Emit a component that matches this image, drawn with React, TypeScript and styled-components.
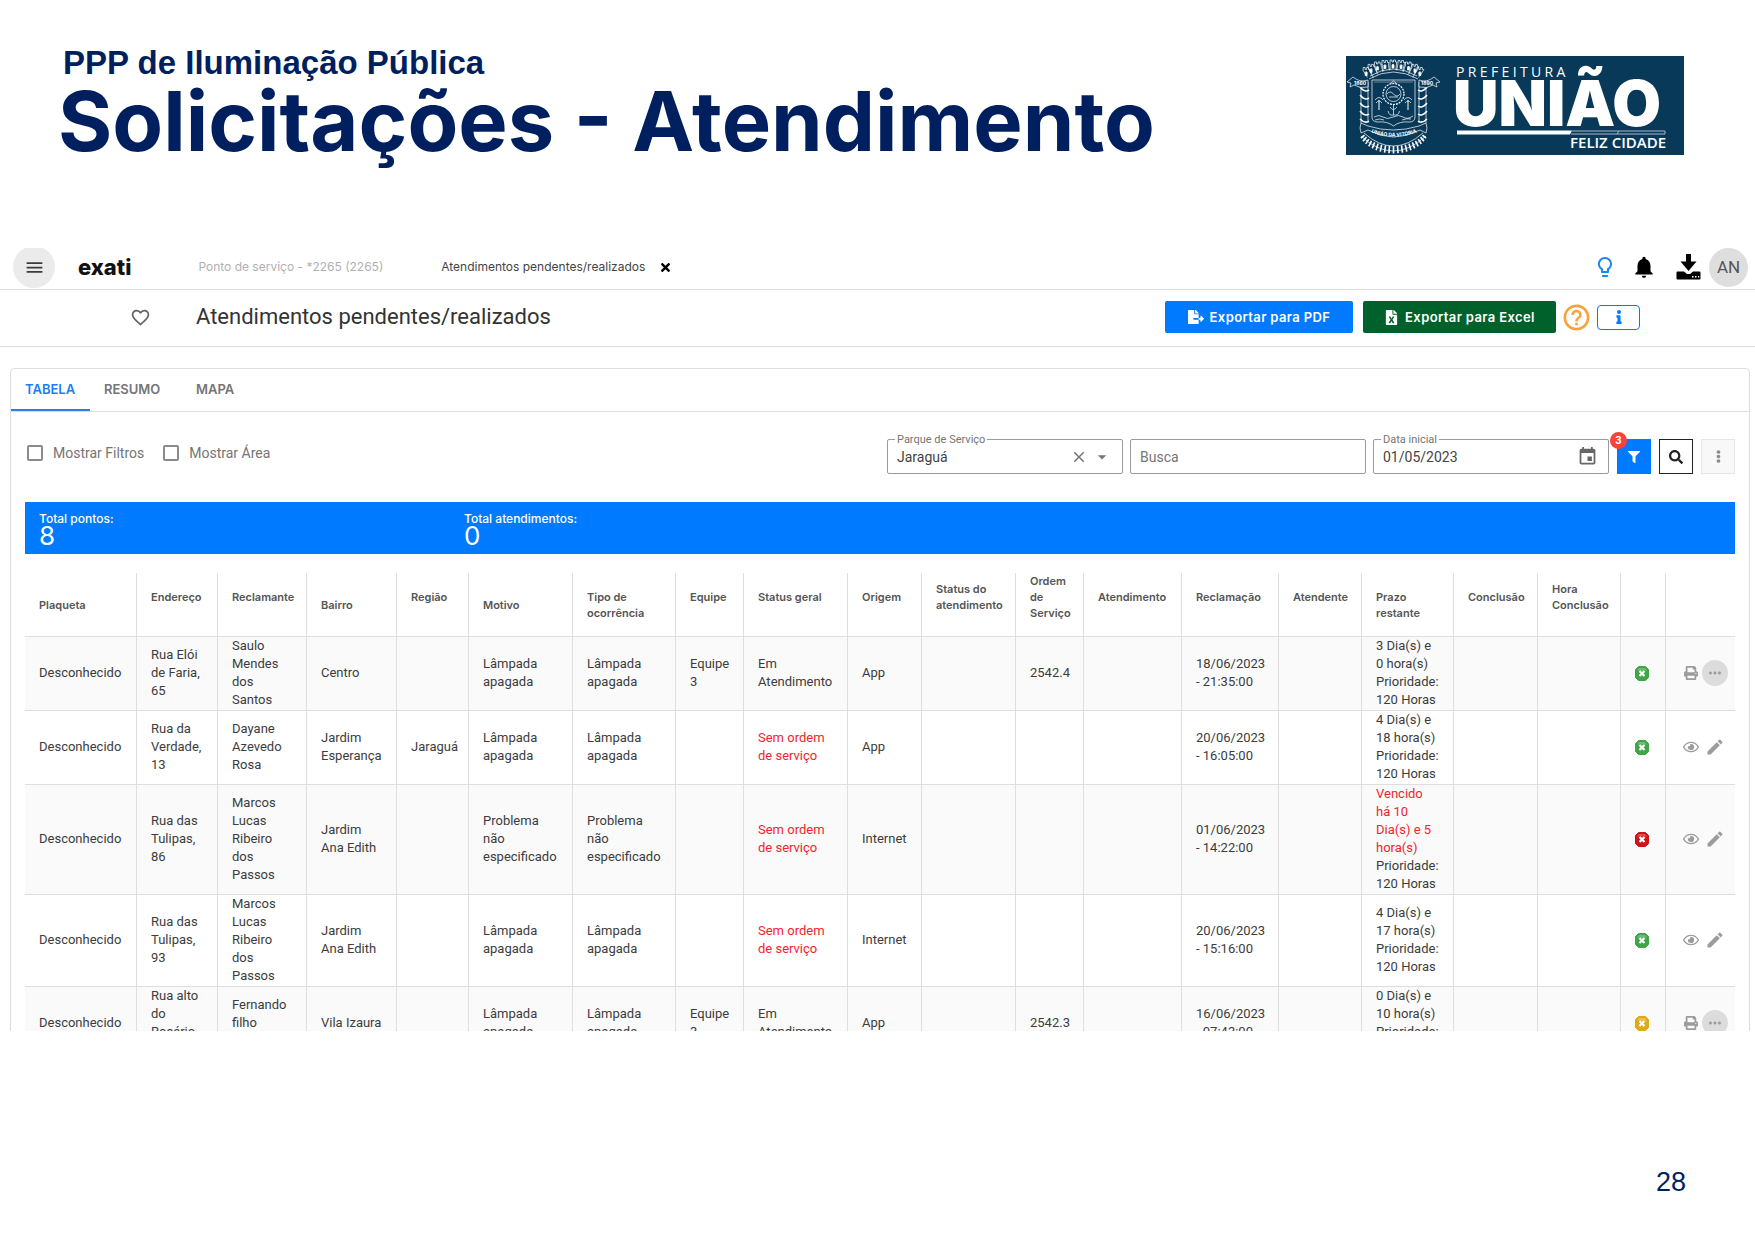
import React from "react";
import styled, { createGlobalStyle } from "styled-components";
import {
  MdMenu, MdLightbulbOutline, MdNotifications, MdFavoriteBorder, MdHelpOutline,
  MdClear, MdArrowDropDown, MdEvent, MdEdit, MdMoreHoriz,
} from "react-icons/md";
import {
  FaTimes, FaFileExport, FaFileExcel, FaInfo, FaFilter, FaSearch, FaEllipsisV, FaPrint, FaRegEye,
} from "react-icons/fa";

const color = {
  navy: "#001f5f",
  blue: "#007bff",
  green: "#00622a",
  line: "#dedede",
  text: "#3c3c3c",
  muted: "#757575",
  red: "#f5222d",
};

const Global = createGlobalStyle`
  *, *::before, *::after { box-sizing: border-box; }
  body { margin: 0; background: #fff; color: ${color.text}; font-family: Roboto, "Liberation Sans", sans-serif; }
  button, input, select { font: inherit; color: inherit; margin: 0; }
  button { padding: 0; border: 0; background: none; cursor: pointer; }
  svg { display: block; flex: none; }
`;

const Slide = styled.div`
  display: flex;
  flex-direction: column;
  min-height: 100vh;
`;

const SlideHeader = styled.header`
  display: flex;
  justify-content: space-between;
  align-items: flex-start;
  padding: 44px 71px 0 58px;
  min-height: 248px;
`;

const Heading = styled.div`
  color: ${color.navy};
  white-space: nowrap;
`;

const Kicker = styled.p`
  margin: 0;
  padding-left: 5px;
  font: 700 33px/38px "Liberation Sans", Arial, sans-serif;
`;

const Title = styled.h1`
  margin: 0;
  font: 700 83px/78px Inter, "Liberation Sans", sans-serif;
`;

const CityLogo = styled.svg`
  width: 338px;
  height: 99px;
  margin-top: 12px;
`;

const AppShot = styled.main`
  max-height: 783px;
  overflow: hidden;
`;

const TopBar = styled.div`
  display: flex;
  align-items: center;
  height: 42px;
  padding: 0 7px 3px 13px;
  border-bottom: 1px solid ${color.line};
`;

const MenuButton = styled.button`
  display: grid;
  place-items: center;
  flex: none;
  width: 42px;
  height: 42px;
  border-radius: 50%;
  background: #ebebeb;
`;

const Brand = styled.a`
  margin-left: 23px;
  color: #111;
  font: 800 22px/26px Inter, sans-serif;
  text-decoration: none;
`;

const OpenPages = styled.nav`
  display: flex;
  align-items: center;
  gap: 58px;
  flex: 1;
  margin-left: 67px;
  font: 12px/16px Inter, sans-serif;
`;

const PageLink = styled.a<{ $active?: boolean }>`
  color: ${(p) => (p.$active ? "#444" : "#b0b0b0")};
  text-decoration: none;
`;

const OpenPage = styled.span`
  display: flex;
  align-items: center;
  gap: 14px;
  color: #222;
`;

const TopActions = styled.div`
  display: flex;
  align-items: center;
  gap: 14px;
`;

const IconButton = styled.button<{ $color?: string }>`
  display: grid;
  place-items: center;
  color: ${(p) => p.$color ?? "#000"};
`;

const UserGroup = styled.div`
  display: flex;
  align-items: center;
  gap: 8px;
  margin-left: 5px;
`;

const Avatar = styled.button`
  width: 39px;
  height: 39px;
  border-radius: 50%;
  background: #dedede;
  color: #555;
  font-size: 17px;
`;

const PageBar = styled.div`
  display: flex;
  align-items: center;
  height: 57px;
  padding: 0 115px 2px 130px;
  border-bottom: 1px solid ${color.line};
`;

const PageTitle = styled.h2`
  flex: 1;
  margin: 0 0 0 45px;
  color: #333;
  font-size: 22px;
  font-weight: 400;
  line-height: 28px;
`;

const PageActions = styled.div`
  display: flex;
  align-items: center;
`;

const ExportButton = styled.button<{ $bg: string; $width: number }>`
  display: flex;
  align-items: center;
  justify-content: center;
  gap: 6px;
  width: ${(p) => p.$width}px;
  height: 32px;
  margin-right: 10px;
  border-radius: 2px;
  background: ${(p) => p.$bg};
  color: #fff;
  font: 600 13px/16px Inter, sans-serif;
  letter-spacing: 0.03em;
`;

const HelpButton = styled(IconButton)`
  width: 30px;
  margin: 0 4px 0 -5px;
`;

const InfoButton = styled.button`
  display: grid;
  place-items: center;
  width: 43px;
  height: 25px;
  margin-left: 2px;
  border: 1px solid ${color.blue};
  border-radius: 4px;
  color: ${color.blue};
`;

const Card = styled.section`
  margin: 21px 5px 0 10px;
  border: 1px solid ${color.line};
  border-radius: 4px;
`;

const Tabs = styled.div`
  display: grid;
  grid-template-columns: 79px 92px auto;
  justify-content: start;
  height: 43px;
  border-bottom: 1px solid ${color.line};
`;

const Tab = styled.button<{ $active?: boolean }>`
  height: 42px;
  padding: 0 0 0 14px;
  border-bottom: 2px solid ${(p) => (p.$active ? "#2a7fe0" : "transparent")};
  color: ${(p) => (p.$active ? "#1b7ff2" : color.muted)};
  font: 600 13px/16px Inter, sans-serif;
  text-align: left;
`;

const Toolbar = styled.div`
  display: flex;
  align-items: center;
  justify-content: space-between;
  padding: 27px 14px 0 16px;
`;

const Checks = styled.div`
  display: flex;
  gap: 19px;
  margin-bottom: 8px;
`;

const Check = styled.label`
  display: flex;
  align-items: center;
  gap: 10px;
  color: ${color.muted};
  font-size: 14px;
  line-height: 18px;

  input {
    appearance: none;
    width: 16px;
    height: 16px;
    border: 2px solid #8a8a8a;
    border-radius: 2px;
  }
`;

const Filters = styled.div`
  display: flex;
  align-items: center;
  gap: 8px;
`;

const Fields = styled.div`
  display: flex;
  gap: 7px;
`;

const FilterButtons = styled.div`
  display: flex;
  gap: 8px;
`;

const Field = styled.div`
  position: relative;
  display: flex;
  align-items: center;
  width: 236px;
  height: 35px;
  padding: 0 10px 0 9px;
  border: 1px solid #9a9a9a;
  border-radius: 2px;
  color: ${color.muted};

  input, select {
    flex: 1;
    min-width: 0;
    height: 20px;
    padding: 0;
    border: 0;
    outline: 0;
    appearance: none;
    background: none;
    color: #444;
    font-size: 14px;
    line-height: 20px;
  }
  input::placeholder { color: ${color.muted}; opacity: 1; }
`;

const FieldLabel = styled.label`
  position: absolute;
  top: -7px;
  left: 7px;
  padding: 0 2px;
  background: #fff;
  font-size: 11px;
  line-height: 13px;
`;

const FieldIcons = styled.div`
  display: flex;
  align-items: center;
  gap: 4px;
`;

const SquareButton = styled.button<{ $kind: "solid" | "outline" | "ghost" }>`
  position: relative;
  display: grid;
  place-items: center;
  width: 34px;
  height: 35px;
  border: ${(p) => ({ solid: "0", outline: "1px solid #222", ghost: "1px solid #e6e6e6" })[p.$kind]};
  background: ${(p) => ({ solid: color.blue, outline: "#fff", ghost: "#f8f8f8" })[p.$kind]};
  color: ${(p) => ({ solid: "#fff", outline: "#222", ghost: "#8a8a8a" })[p.$kind]};
`;

const Badge = styled.span`
  position: absolute;
  top: -7px;
  left: -7px;
  width: 17px;
  height: 17px;
  border-radius: 50%;
  background: #f9423a;
  color: #fff;
  font-size: 11px;
  font-weight: 700;
  line-height: 17px;
`;

const Totals = styled.dl`
  display: grid;
  grid-template-columns: repeat(4, 1fr);
  margin: 28px 14px 0;
  padding: 9px 5px 9px;
  background: ${color.blue};
  color: #fff;
`;

const Total = styled.div`
  padding-left: 9px;

  dt { font: 500 12px/16px Inter, sans-serif; }
  dd { margin: 0; font: 26px/18px Inter, sans-serif; }
`;

const TableWrap = styled.div`
  padding: 19px 14px 0;
`;

const Table = styled.table`
  width: 100%;
  table-layout: fixed;
  border-collapse: separate;
  border-spacing: 0;
  font-size: 13px;
  line-height: 18px;
`;

const Th = styled.th<{ $sortable?: boolean }>`
  height: 64px;
  padding: 0 0 ${(p) => (p.$sortable ? 15 : 0)}px 14px;
  border: solid ${color.line};
  border-width: 0 1px 1px 0;
  color: #555;
  font: 600 11px/16px Inter, sans-serif;
  text-align: left;
  vertical-align: middle;
  white-space: pre;

  &:last-child { border-right: 0; }
`;

const Row = styled.tr`
  &:nth-child(odd) { background: #fafafa; }
`;

const Td = styled.td`
  padding: 0 0 1px 14px;
  border: solid ${color.line};
  border-width: 0 1px 1px 0;
  vertical-align: middle;
  white-space: pre;

  &:last-child { border-right: 0; }
`;

const Alert = styled.span`
  color: ${color.red};
`;

const Actions = styled.div`
  display: flex;
  align-items: center;
  gap: 3px;
  padding-left: 3px;
`;

const ActionButton = styled.button<{ $size: number; $round?: boolean }>`
  display: grid;
  place-items: center;
  width: ${(p) => p.$size}px;
  height: 26px;
  border-radius: 50%;
  background: ${(p) => (p.$round ? "#dcdcdc" : "none")};
  color: #9c9c9c;
`;

const SlideFooter = styled.footer`
  margin-top: auto;
  padding: 0 69px 43px;
  color: ${color.navy};
  font: 27px/30px "Liberation Sans", Arial, sans-serif;
  text-align: right;
`;

/* Points along an arc, used for the crown merlons and the rail sleepers. */
const along = (from: number, to: number, n: number) =>
  Array.from({ length: n }, (_, i) => ((from + ((to - from) * i) / (n - 1)) * Math.PI) / 180);

const Crest = () => (
  <g fill="none" stroke="#fff" strokeWidth="0.7">
    <path d="M23 23Q47 9 72 23M24 20Q47 6 71 20" />
    {along(-150, -30, 9).map((a, i) => {
      const x = 47.5 + 31 * Math.cos(a);
      const y = 22 + 15 * Math.sin(a);
      const d = (x - 47.5) * 0.16;
      return (
        <g key={i}>
          <path d={`M${x - 3.5 - d} ${y + 7}L${x - 3.5} ${y}v-3h2v2h1.5v-2h2v2h1.5l-.5 1L${x + 2.5 - d} ${y + 7}`} />
          <path d={`M${x - 1.5} ${y + 5}v-3l1 -1l1 1v3z`} fill="#fff" />
        </g>
      );
    })}
    <path d="M26 24H69V61Q69 66 63 66Q54 65 47.5 70Q41 65 32 66Q26 66 26 61Z" />
    <path d="M28 26H67" strokeWidth="0.4" />
    <circle cx="47.5" cy="38" r="10.5" strokeDasharray="2 1" strokeWidth="1.2" />
    <circle cx="47.5" cy="38" r="7.5" />
    <path d="M41 38q3 -4 6.500 0t6.500 0M43 41h9M45 27l2.500 -2l2.500 2M47.500 49v10M42 55q1 5 5.500 4q5 1 6 -4M44 51q3 5 7 0" />
    <path d="M33 44v10M62 44v10" strokeWidth="1" />
    <path d="M29 44q4 -5 8 0M30 47q3 -4 6 0M58 44q4 -5 8 0M59 47q3 -4 6 0" />
    <path d="M28 61q5 -3 9 0t10 0t10 0t10 -1M29 64q5 -2 9 0M56 64q5 -2 9 -1" />
    <path d="M15 26V67M22 26V67M73 26V67M80 26V67" />
    <path d="M14 31q5 6 9 3M14 39q5 6 9 3M14 47q5 6 9 3M14 55q5 6 9 3M14 63q5 5 9 2M81 31q-5 6 -9 3M81 39q-5 6 -9 3M81 47q-5 6 -9 3M81 55q-5 6 -9 3M81 63q-5 5 -9 2" strokeWidth="1.5" />
    <path d="M1 26l6 -5q7 6 15 3v7q-8 2 -14 -2l-4 2l1 -4zM94 26l-6 -5q-7 6 -15 3v7q8 2 14 -2l4 2l-1 -4z" fill="#083959" />
    <path d="M15 67Q13 72 15 77L22 74Q47 88 74 74L80 77Q82 72 80 67L73 70Q47 78 22 70Z" fill="#083959" />
    <path d="M18 77Q47 103 77 77M15 80Q47 110 80 80" />
    {along(155, 25, 19).map((a, i) => (
      <path
        key={i}
        strokeWidth="1.6"
        d={`M${47.5 + 32 * Math.cos(a)} ${71 + 19 * Math.sin(a)}L${47.5 + 36 * Math.cos(a)} ${71 + 26.5 * Math.sin(a)}`}
      />
    ))}
    <g fill="#fff" stroke="none" fontFamily="Inter, sans-serif" fontWeight="700">
      <path id="banner" d="M24 76Q47.500 85 72 76" fill="none" />
      <text fontSize="5"><textPath href="#banner" startOffset="50%" textAnchor="middle">UNIÃO DA VITORIA</textPath></text>
      <text fontSize="5" x="8" y="29">1860</text>
      <text fontSize="5" x="75" y="29">1890</text>
    </g>
  </g>
);

const Logo = () => (
  <CityLogo viewBox="0 0 338 99" role="img" aria-label="Prefeitura União, Feliz Cidade">
    <rect width="338" height="99" fill="#083959" />
    <Crest />
    <g fill="#fff">
      <text x="110" y="21" fontFamily="Open Sans, sans-serif" fontSize="14" letterSpacing="0.24em">PREFEITURA</text>
      <text x="107" y="70" fontFamily="Inter, sans-serif" fontSize="63" fontWeight="900">UNIÃO</text>
      <text x="320" y="92" textAnchor="end" fontFamily="Open Sans, sans-serif" fontSize="15" fontWeight="600">FELIZ CIDADE</text>
      <path d="M111 74.500H226L224 78.500H111Z" />
      <path d="M226 75H319V78H225M273 75l-2 3" fill="none" stroke="#a9bccb" />
    </g>
  </CityLogo>
);

const DownloadIcon = () => (
  <svg width="25" height="26" viewBox="0 0 25 26" aria-hidden="true">
    <path d="M10 0h5v7.500h5.500L12.500 17 4.500 7.500h5.500z" />
    <path fillRule="evenodd" d="M1.500 17.500h6.500l3 2.500h3l3 -2.500h6.500q1 0 1 1v6q0 1 -1 1H1.500q-1 0 -1 -1v-6q0 -1 1 -1zM16 22v1.500h1.500V22zM19 22v1.500h1.500V22zM22 22v1.500h1.200V22z" />
  </svg>
);

const fills = { green: "#3fa648", red: "#cf1318", yellow: "#dfab12" };

const StatusIcon = ({ tone }: { tone: keyof typeof fills }) => (
  <svg width="14" height="15" viewBox="0 0 14 15" role="img" aria-label="Prazo">
    <path d="M3.500 .5h7l3 3v8l-3 3h-7l-3 -3v-8z" fill={fills[tone]} stroke={fills[tone]} strokeLinejoin="round" />
    <path d="M2 4.500l2 -2.500h6l2 2.500z" fill="#fff" opacity=".25" />
    <path d="M4.500 5l5 5M9.500 5l-5 5" stroke="#fff" strokeWidth="2.200" />
  </svg>
);

const columns: { label: string; width: number; sortable?: boolean }[] = [
  { label: "Plaqueta", width: 112 },
  { label: "Endereço", width: 81, sortable: true },
  { label: "Reclamante", width: 89, sortable: true },
  { label: "Bairro", width: 90 },
  { label: "Região", width: 72, sortable: true },
  { label: "Motivo", width: 104 },
  { label: "Tipo de\nocorrência", width: 103 },
  { label: "Equipe", width: 68, sortable: true },
  { label: "Status geral", width: 104, sortable: true },
  { label: "Origem", width: 74, sortable: true },
  { label: "Status do\natendimento", width: 94, sortable: true },
  { label: "Ordem\nde\nServiço", width: 68, sortable: true },
  { label: "Atendimento", width: 98, sortable: true },
  { label: "Reclamação", width: 97, sortable: true },
  { label: "Atendente", width: 83, sortable: true },
  { label: "Prazo\nrestante", width: 92 },
  { label: "Conclusão", width: 84, sortable: true },
  { label: "Hora\nConclusão", width: 83, sortable: true },
  { label: "", width: 45 },
  { label: "", width: 69 },
];

type Request = {
  address: string; claimant: string; district: string; region?: string; reason: string;
  team?: string; open?: boolean; origin: string; order?: string; date: string;
  due: string; overdue?: boolean; tone: keyof typeof fills;
};

const requests: Request[] = [
  { address: "Rua Elói\nde Faria,\n65", claimant: "Saulo\nMendes\ndos\nSantos", district: "Centro", reason: "Lâmpada\napagada", team: "Equipe\n3", open: true, origin: "App", order: "2542.4", date: "18/06/2023\n- 21:35:00", due: "3 Dia(s) e\n0 hora(s)", tone: "green" },
  { address: "Rua da\nVerdade,\n13", claimant: "Dayane\nAzevedo\nRosa", district: "Jardim\nEsperança", region: "Jaraguá", reason: "Lâmpada\napagada", origin: "App", date: "20/06/2023\n- 16:05:00", due: "4 Dia(s) e\n18 hora(s)", tone: "green" },
  { address: "Rua das\nTulipas,\n86", claimant: "Marcos\nLucas\nRibeiro\ndos\nPassos", district: "Jardim\nAna Edith", reason: "Problema\nnão\nespecificado", origin: "Internet", date: "01/06/2023\n- 14:22:00", due: "Vencido\nhá 10\nDia(s) e 5\nhora(s)", overdue: true, tone: "red" },
  { address: "Rua das\nTulipas,\n93", claimant: "Marcos\nLucas\nRibeiro\ndos\nPassos", district: "Jardim\nAna Edith", reason: "Lâmpada\napagada", origin: "Internet", date: "20/06/2023\n- 15:16:00", due: "4 Dia(s) e\n17 hora(s)", tone: "green" },
  { address: "Rua alto\ndo\nRosário\n\u00a0", claimant: "Fernando\nfilho\n\u00a0", district: "Vila Izaura", reason: "Lâmpada\napagada", team: "Equipe\n3", open: true, origin: "App", order: "2542.3", date: "16/06/2023\n- 07:43:00", due: "0 Dia(s) e\n10 hora(s)", tone: "yellow" },
];

const RequestRow = ({ r }: { r: Request }) => (
  <Row>
    <Td>Desconhecido</Td>
    <Td>{r.address}</Td>
    <Td>{r.claimant}</Td>
    <Td>{r.district}</Td>
    <Td>{r.region}</Td>
    <Td>{r.reason}</Td>
    <Td>{r.reason}</Td>
    <Td>{r.team}</Td>
    <Td>{r.open ? "Em\nAtendimento" : <Alert>{"Sem ordem\nde serviço"}</Alert>}</Td>
    <Td>{r.origin}</Td>
    <Td />
    <Td>{r.order}</Td>
    <Td />
    <Td>{r.date}</Td>
    <Td />
    <Td>{r.overdue ? <Alert>{r.due}</Alert> : r.due}{"\nPrioridade:\n120 Horas"}</Td>
    <Td />
    <Td />
    <Td><StatusIcon tone={r.tone} /></Td>
    <Td>
      <Actions>
        <ActionButton $size={16} aria-label={r.open ? "Imprimir" : "Visualizar"}>
          {r.open ? <FaPrint size={14} /> : <FaRegEye size={16} />}
        </ActionButton>
        <ActionButton $size={26} $round={r.open} aria-label={r.open ? "Mais opções" : "Editar"}>
          {r.open ? <MdMoreHoriz size={18} /> : <MdEdit size={20} />}
        </ActionButton>
      </Actions>
    </Td>
  </Row>
);

export default function App() {
  return (
    <Slide>
      <Global />
      <SlideHeader>
        <Heading>
          <Kicker>PPP de Iluminação Pública</Kicker>
          <Title>Solicitações - Atendimento</Title>
        </Heading>
        <Logo />
      </SlideHeader>

      <AppShot>
        <TopBar>
          <MenuButton aria-label="Menu"><MdMenu size={21} /></MenuButton>
          <Brand href="#inicio">exati</Brand>
          <OpenPages>
            <PageLink href="#ponto">Ponto de serviço - *2265 (2265)</PageLink>
            <OpenPage>
              <PageLink href="#atendimentos" $active>Atendimentos pendentes/realizados</PageLink>
              <IconButton aria-label="Fechar"><FaTimes size={13} /></IconButton>
            </OpenPage>
          </OpenPages>
          <TopActions>
            <IconButton $color="#1b87f5" aria-label="Dicas"><MdLightbulbOutline size={24} /></IconButton>
            <IconButton aria-label="Notificações"><MdNotifications size={26} /></IconButton>
            <UserGroup>
              <IconButton aria-label="Downloads"><DownloadIcon /></IconButton>
              <Avatar>AN</Avatar>
            </UserGroup>
          </TopActions>
        </TopBar>

        <PageBar>
          <IconButton $color="#666" aria-label="Favoritar"><MdFavoriteBorder size={21} /></IconButton>
          <PageTitle>Atendimentos pendentes/realizados</PageTitle>
          <PageActions>
            <ExportButton $bg={color.blue} $width={188}><FaFileExport size={16} />Exportar para PDF</ExportButton>
            <ExportButton $bg={color.green} $width={193}><FaFileExcel size={15} />Exportar para Excel</ExportButton>
            <HelpButton $color="#f9a23a" aria-label="Ajuda"><MdHelpOutline size={31} /></HelpButton>
            <InfoButton aria-label="Informações"><FaInfo size={14} /></InfoButton>
          </PageActions>
        </PageBar>

        <Card>
          <Tabs role="tablist">
            <Tab role="tab" aria-selected $active>TABELA</Tab>
            <Tab role="tab">RESUMO</Tab>
            <Tab role="tab">MAPA</Tab>
          </Tabs>

          <Toolbar>
            <Checks>
              <Check><input type="checkbox" />Mostrar Filtros</Check>
              <Check><input type="checkbox" />Mostrar Área</Check>
            </Checks>
            <Filters>
              <Fields>
                <Field>
                  <FieldLabel htmlFor="parque">Parque de Serviço</FieldLabel>
                  <select id="parque" defaultValue="Jaraguá"><option>Jaraguá</option></select>
                  <FieldIcons>
                    <IconButton $color={color.muted} aria-label="Limpar"><MdClear size={18} /></IconButton>
                    <MdArrowDropDown size={20} />
                  </FieldIcons>
                </Field>
                <Field>
                  <input id="busca" aria-label="Busca" placeholder="Busca" />
                </Field>
                <Field>
                  <FieldLabel htmlFor="data">Data inicial</FieldLabel>
                  <input id="data" defaultValue="01/05/2023" />
                  <IconButton $color="#666" aria-label="Abrir calendário"><MdEvent size={21} /></IconButton>
                </Field>
              </Fields>
              <FilterButtons>
                <SquareButton $kind="solid" aria-label="Filtrar"><FaFilter size={12} /><Badge>3</Badge></SquareButton>
                <SquareButton $kind="outline" aria-label="Pesquisar"><FaSearch size={14} /></SquareButton>
                <SquareButton $kind="ghost" aria-label="Mais"><FaEllipsisV size={13} /></SquareButton>
              </FilterButtons>
            </Filters>
          </Toolbar>

          <Totals>
            <Total><dt>Total pontos:</dt><dd>8</dd></Total>
            <Total><dt>Total atendimentos:</dt><dd>0</dd></Total>
          </Totals>

          <TableWrap>
            <Table>
              <colgroup>{columns.map((c, i) => <col key={i} width={c.width} />)}</colgroup>
              <thead>
                <tr>{columns.map((c, i) => <Th key={i} $sortable={c.sortable}>{c.label}</Th>)}</tr>
              </thead>
              <tbody>{requests.map((r, i) => <RequestRow key={i} r={r} />)}</tbody>
            </Table>
          </TableWrap>
        </Card>
      </AppShot>

      <SlideFooter>28</SlideFooter>
    </Slide>
  );
}
